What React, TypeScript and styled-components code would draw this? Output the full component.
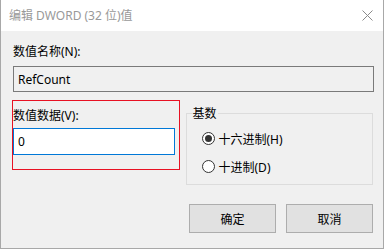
import React from "react";
import styled, { createGlobalStyle } from "styled-components";

const Global = createGlobalStyle`
  html, body { margin: 0; padding: 0; background: #ffffff; }
  body { font-family: "Noto Sans", "Noto Sans CJK SC", sans-serif; font-size: 12px; color: #000; }
`;

const Window = styled.div`
  width: 382px;
  height: 248px;
  border: 1px solid #a8a8a8;
  border-top: none;
  display: flex;
  flex-direction: column;
  background: #f0f0f0;
`;

const TitleBar = styled.div`
  height: 31px;
  background: #ffffff;
  display: flex;
  align-items: center;
  justify-content: space-between;
  padding: 0 10px 0 8px;
`;

const Title = styled.span`
  font-size: 12px;
  color: #999999;
  line-height: 17px;
  margin-top: -1px;
`;

const Close = styled.svg`
  width: 11px;
  height: 11px;
  margin-top: -1px;
`;

const Body = styled.div`
  flex: 1;
  display: flex;
  flex-direction: column;
  padding: 12px 10px 0 11px;
`;

const Label = styled.div`
  line-height: 17px;
  height: 17px;
  padding-left: 1px;
  margin-bottom: 6px;
`;

const TextBox = styled.div<{ $focused?: boolean; $width: number }>`
  box-sizing: border-box;
  width: ${(p) => p.$width}px;
  height: 26px;
  border: 1px solid ${(p) => (p.$focused ? "#0078d7" : "#7a7a7a")};
  background: ${(p) => (p.$focused ? "#ffffff" : "#f0f0f0")};
  display: flex;
  align-items: center;
  padding-left: 4px;
  font-size: 12px;
  margin-left: 1px;
`;

const Row = styled.div`
  display: flex;
  margin-top: 8px;
`;

const FocusFrame = styled.div`
  box-sizing: border-box;
  width: 169px;
  height: 70px;
  border: 1px solid #e81123;
  display: flex;
  flex-direction: column;
  padding-top: 6px;
`;

const ValueLabel = styled(Label)`
  padding-left: 0;
  margin-bottom: 4px;
`;

const ValueBox = styled(TextBox)`
  margin-left: 0;
  height: 27px;
`;

const Group = styled.fieldset`
  box-sizing: border-box;
  margin: 5px 0 0 6px;
  width: 189px;
  height: 80px;
  border: 1px solid #dcdcdc;
  padding: 8px 0 0 15px;
  display: flex;
  flex-direction: column;
  gap: 11px;
`;

const Legend = styled.legend`
  padding: 0 1px;
  margin-left: -10px;
  line-height: 17px;
`;

const RadioRow = styled.div`
  display: flex;
  align-items: center;
  gap: 4px;
  height: 17px;
`;

const Radio = styled.span<{ $checked?: boolean }>`
  box-sizing: border-box;
  width: 13px;
  height: 13px;
  border-radius: 50%;
  border: 1px solid #333333;
  background: #ffffff;
  display: flex;
  align-items: center;
  justify-content: center;
  &::after {
    content: "";
    display: ${(p) => (p.$checked ? "block" : "none")};
    width: 7px;
    height: 7px;
    border-radius: 50%;
    background: #333333;
  }
`;

const Buttons = styled.div`
  display: flex;
  justify-content: flex-end;
  gap: 10px;
  margin-top: 19px;
`;

const Button = styled.button`
  box-sizing: border-box;
  width: 87px;
  height: 29px;
  background: #e1e1e1;
  border: 1px solid #adadad;
  font-family: "Noto Sans", "Noto Sans CJK SC", sans-serif;
  font-size: 12px;
  color: #000;
  padding: 0;
`;

export default function App() {
  return (
    <>
      <Global />
      <Window>
        <TitleBar>
          <Title>编辑 DWORD (32 位)值</Title>
          <Close viewBox="0 0 11 11">
            <path d="M0.5 0.5 L10.5 10.5 M10.5 0.5 L0.5 10.5" stroke="#8a8a8a" strokeWidth="1" fill="none" />
          </Close>
        </TitleBar>
        <Body>
          <Label>数值名称(N):</Label>
          <TextBox $width={361}>RefCount</TextBox>
          <Row>
            <FocusFrame>
              <ValueLabel>数值数据(V):</ValueLabel>
              <ValueBox $focused $width={162}>0</ValueBox>
            </FocusFrame>
            <Group>
              <Legend>基数</Legend>
              <RadioRow>
                <Radio $checked />
                <span>十六进制(H)</span>
              </RadioRow>
              <RadioRow>
                <Radio />
                <span>十进制(D)</span>
              </RadioRow>
            </Group>
          </Row>
          <Buttons>
            <Button>确定</Button>
            <Button>取消</Button>
          </Buttons>
        </Body>
      </Window>
    </>
  );
}
